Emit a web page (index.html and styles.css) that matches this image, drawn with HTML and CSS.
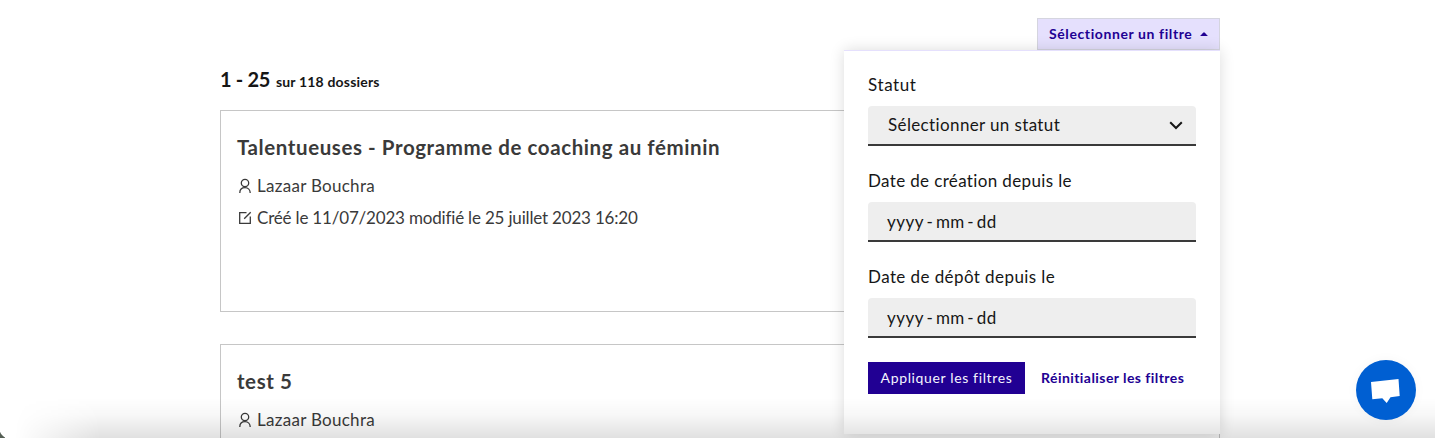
FILE: index.html
```html
<!DOCTYPE html>
<html lang="fr">
<head>
<meta charset="utf-8">
<title>Dossiers</title>
<link rel="stylesheet" href="styles.css">
</head>
<body>
<main class="page">
  <div class="toolbar">
    <div class="dropdown">
      <button class="filter-btn"><span class="filter-label">Sélectionner un filtre</span><svg class="caret" width="8" height="4" viewBox="0 0 8 4"><path d="M0 4C1.500 3 3 .3 4 .3S6.500 3 8 4z" fill="currentColor"/></svg></button>
      <form class="panel">
        <div class="field"><label class="label l-statut">Statut</label>
          <div class="input select"><span class="t-select">Sélectionner un statut</span><svg width="14" height="9" viewBox="0 0 14 9"><path d="M1.200 1.200L7 7l5.800-5.800" fill="none" stroke="#161616" stroke-width="2"/></svg></div></div>
        <div class="field"><label class="label l-creation">Date de création depuis le</label>
          <div class="input date"><span>yyyy</span><span>-</span><span>mm</span><span>-</span><span>dd</span></div></div>
        <div class="field"><label class="label l-depot">Date de dépôt depuis le</label>
          <div class="input date"><span>yyyy</span><span>-</span><span>mm</span><span>-</span><span>dd</span></div></div>
        <div class="actions"><button class="apply" type="button">Appliquer les filtres</button><button class="reset" type="button">Réinitialiser les filtres</button></div>
      </form>
    </div>
  </div>
  <h1 class="count"><span class="range">1 - 25</span><span class="total">sur 118 dossiers</span></h1>
  <article class="card">
    <h2 class="title">Talentueuses - Programme de coaching au féminin</h2>
    <p class="meta"><svg width="16" height="16" viewBox="0 0 16 16" fill="none" stroke="currentColor" stroke-width="1.300"><circle cx="8" cy="5" r="3.700"/><path d="M2.800 15c0-3.200 2.100-5.300 5.200-5.300s5.200 2.100 5.200 5.300"/></svg><span class="name">Lazaar Bouchra</span></p>
    <p class="meta"><svg width="16" height="16" viewBox="0 0 16 16" fill="none" stroke="currentColor" stroke-width="1.300"><path d="M9.500 2.700H2.700v10.600h10.600V6.500M7.200 8.800L13.700 2.300"/></svg><span class="dates">Créé le 11/07/2023 modifié le 25 juillet 2023 16:20</span></p>
  </article>
  <article class="card card-cut">
    <h2 class="title short">test 5</h2>
    <p class="meta"><svg width="16" height="16" viewBox="0 0 16 16" fill="none" stroke="currentColor" stroke-width="1.300"><circle cx="8" cy="5" r="3.700"/><path d="M2.800 15c0-3.200 2.100-5.300 5.200-5.300s5.200 2.100 5.200 5.300"/></svg><span class="name">Lazaar Bouchra</span></p>
  </article>
</main>
<div class="bottom-shade"></div>
<div class="corner"></div>
<button class="chat" aria-label="Chat"><svg width="60" height="60" viewBox="0 0 60 60"><path d="M15 22L42.500 19 43.700 36 34.500 37.200 30.700 43 26.300 38.200 16.300 39.200z" fill="#fff"/></svg></button>
</body>
</html>
```
FILE: styles.css
```css
* { box-sizing: border-box; }
body { margin: 0; height: 438px; overflow: hidden; position: relative; background: #fff; color: #161616; font: 17px/24px Lato, "Open Sans", sans-serif; font-variant-ligatures: none; }
button { border: 0; margin: 0; padding: 0; font: inherit; background: none; }
h1, h2, p { margin: 0; }
span, label { white-space: nowrap; }
.page { width: 1000px; margin-left: 220px; padding-top: 18px; }
.toolbar { display: flex; justify-content: flex-end; height: 32px; }
.dropdown { position: relative; }
.filter-btn { display: flex; align-items: center; justify-content: space-between; width: 183px; height: 32px; padding: 0 11px; border: 1px solid #d5d5df; background: #e5e0fd; color: #210093; font-size: 14px; font-weight: 700; letter-spacing: .6px; }
.panel { position: absolute; z-index: 2; top: 32px; right: 0; width: 376px; height: 384px; padding: 22px 24px; border-top: 1px solid #e5e0fd; background: #fff; box-shadow: 0 0 14px rgba(0,0,0,.14); }
.field { margin-bottom: 24px; }
.label { display: block; height: 24px; margin-bottom: 9px; }
.field + .field .label { margin-bottom: 8px; line-height: 22px; }
.l-statut { letter-spacing: .6px; }
.l-creation { letter-spacing: .36px; }
.l-depot { letter-spacing: .42px; }
.input { display: flex; align-items: center; height: 40px; border-bottom: 2px solid #3a3a3a; border-radius: 4px 4px 0 0; background: #eee; }
.select { justify-content: space-between; padding: 0 13px 0 20px; }
.t-select { letter-spacing: .37px; }
.date { gap: 2.500px; padding: 2px 0 0 19px; letter-spacing: .5px; }
.actions { display: flex; gap: 16px; }
.apply { width: 157px; height: 32px; background: #210093; color: #f5f5fe; font-size: 14px; letter-spacing: .64px; }
.reset { color: #210093; font-size: 14px; font-weight: 700; letter-spacing: .44px; white-space: nowrap; }
.count { display: flex; align-items: baseline; gap: 6px; height: 28px; margin: 16px 0; line-height: 27px; }
.range { font-size: 20px; letter-spacing: -.35px; }
.total { font-size: 14px; letter-spacing: .18px; }
.card { height: 202px; padding: 22px 16px; margin-bottom: 32px; border: 1px solid #c6c6c6; color: #3a3a3a; }
.card-cut { height: 94px; margin-bottom: 0; padding-bottom: 0; border-bottom: 0; }
.card-cut .meta { margin-bottom: 0; }
.title { font-size: 20.500px; line-height: 28px; margin-bottom: 13px; letter-spacing: .58px; }
.meta { display: flex; align-items: center; gap: 4px; height: 24px; margin-bottom: 8px; }
.name { letter-spacing: .28px; }
.dates { letter-spacing: -.18px; }
.bottom-shade { position: absolute; z-index: 3; left: 0; right: 0; bottom: 0; height: 40px; background: linear-gradient(transparent, rgba(0,0,0,.03) 45%, rgba(0,0,0,.12)); -webkit-mask-image: linear-gradient(90deg, transparent 15px, #000 100px); mask-image: linear-gradient(90deg, transparent 15px, #000 100px); }
.corner { position: absolute; left: 0; bottom: 0; width: 5px; height: 9px; background: radial-gradient(circle at 11px -2px, transparent 11.500px, #555f55 12.500px); }
.chat { position: absolute; z-index: 4; left: 1356px; top: 360px; width: 60px; height: 60px; border-radius: 50%; background: #005fd2; box-shadow: 0 0 12px rgba(0,0,0,.04); }
.chat svg { display: block; }
```
